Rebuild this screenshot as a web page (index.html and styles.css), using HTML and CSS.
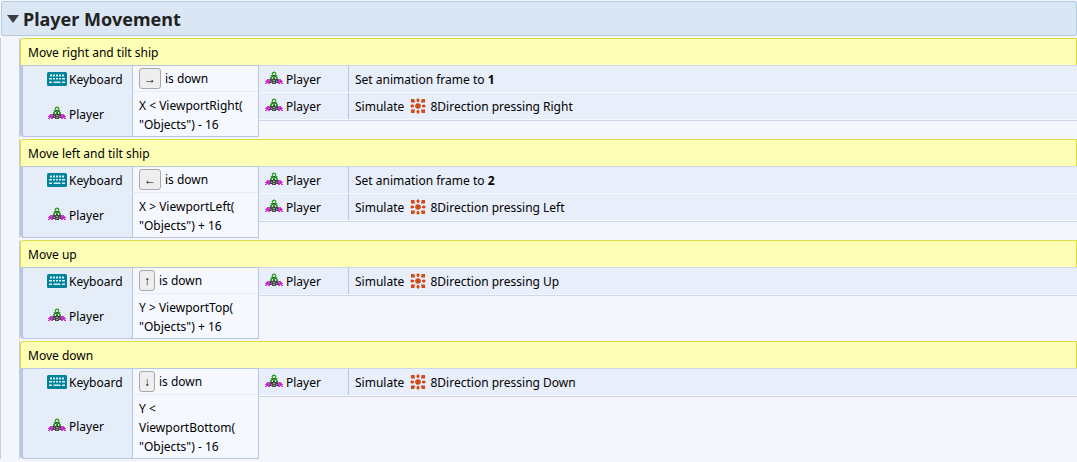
FILE: index.html
```html
<!DOCTYPE html>
<html lang="en">
<head>
<meta charset="utf-8">
<title>Event sheet</title>
<link rel="stylesheet" href="styles.css">
</head>
<body>
<svg class="symbols" aria-hidden="true">
  <symbol id="keyboard" viewBox="0 0 20 14">
    <rect width="20" height="14" rx="1.500" fill="#00829b"/>
    <path fill="#d5edf4" d="M3 2.500h2v2H3zM6 2.500h2v2H6zM9 2.500h2v2H9zM12 2.500h2v2h-2zM15 2.500h2v2h-2zM2 6h3v1.500H2zM6 6h2v1.500H6zM9 6h2v1.500H9zM12 6h2v1.500h-2zM15 6h3v1.500h-3zM2 9.500h3v1.500H2zM6.500 9.500h7v1.500h-7zM15 9.500h3v1.500h-3z"/>
  </symbol>
  <symbol id="ship" viewBox="0 0 18 14" shape-rendering="crispEdges">
    <path fill="#cf38d6" d="M2 8h3v1H2zM1 9h4v1H1zM0 10h5v1H0zM1 11h5v1H1zM0 12h2v1H0zM3 12h2v1H3zM13 8h3v1h-3zM13 9h4v1h-4zM13 10h5v1h-5zM12 11h5v1h-5zM16 12h2v1h-2zM13 12h2v1h-2z"/>
    <path fill="#92209a" d="M2 10h1v1H2zM4 11h1v1H4zM15 10h1v1h-1zM13 11h1v1h-1z"/>
    <path fill="#a6cfa8" d="M8 0h2v1H8zM6 2h1v1H6zM11 2h1v1h-1zM5 4h1v1H5zM12 4h1v1h-1z"/>
    <path fill="#454b45" d="M7 2h4v10H7zM6 4h6v8H6zM5 7h8v5H5zM7 12h4v1H7z"/>
    <path fill="#35a036" d="M7 1h4v1H7zM7 2h1v3H7zM10 2h1v3h-1zM6 4h1v4H6zM11 4h1v4h-1zM5 6h1v2H5zM12 6h1v2h-1zM8 5h2v2H8z"/>
    <path fill="#c4ecb6" d="M8 2h2v2H8zM7 6h1v2H7zM10 6h1v2h-1z"/>
    <path fill="#9b9f9b" d="M8 9h2v1H8zM6 10h1v1H6zM11 10h1v1h-1zM8 11h2v1H8z"/>
  </symbol>
  <symbol id="direction" viewBox="0 0 16 16">
    <g fill="#d34a12">
      <circle cx="8" cy="8" r="2.800"/>
      <path d="M8 0l2.300 2.500H9V4H7V2.500H5.700zM8 16l2.300-2.500H9V12H7v1.500H5.700zM0 8l2.500-2.300V7H4v2H2.500v1.300zM16 8l-2.500-2.300V7H12v2h1.500v1.300z"/>
      <path d="M1 1h3.500v2h.5v1.500H3V4.500H1zM15 1h-3.500v2H11v1.500h2V4.500h2zM1 15h3.500v-2H5v-1.500H1zM15 15h-3.500v-2H11v-1.500h4z"/>
    </g>
  </symbol>
</svg>

<main class="sheet">
  <h1 class="group-header">
    <button class="toggle" type="button" aria-expanded="true" aria-label="Collapse group"><svg class="caret" viewBox="0 0 12 8"><path d="M0 0h12L6 8z"/></svg></button>
    <span>Player Movement</span>
  </h1>
  <div class="group-body">
    <section class="block">
      <h2 class="comment">Move right and tilt ship</h2>
      <div class="event">
        <div class="conditions">
          <div class="condition"><div class="object"><svg class="icon-key"><use href="#keyboard"/></svg><span>Keyboard</span></div><div class="test"><kbd>→</kbd> is down</div></div>
          <div class="condition"><div class="object"><svg class="icon-ship"><use href="#ship"/></svg><span>Player</span></div><div class="test">X &lt; ViewportRight(<wbr>"Objects") - 16</div></div>
        </div>
        <div class="actions">
          <div class="action"><div class="object"><svg class="icon-ship"><use href="#ship"/></svg><span>Player</span></div><div class="task">Set animation frame to <b>1</b></div></div>
          <div class="action"><div class="object"><svg class="icon-ship"><use href="#ship"/></svg><span>Player</span></div><div class="task">Simulate <svg class="icon-dir"><use href="#direction"/></svg> 8Direction pressing Right</div></div>
        </div>
      </div>
    </section>
    <section class="block">
      <h2 class="comment">Move left and tilt ship</h2>
      <div class="event">
        <div class="conditions">
          <div class="condition"><div class="object"><svg class="icon-key"><use href="#keyboard"/></svg><span>Keyboard</span></div><div class="test"><kbd>←</kbd> is down</div></div>
          <div class="condition"><div class="object"><svg class="icon-ship"><use href="#ship"/></svg><span>Player</span></div><div class="test">X &gt; ViewportLeft(<wbr>"Objects") + 16</div></div>
        </div>
        <div class="actions">
          <div class="action"><div class="object"><svg class="icon-ship"><use href="#ship"/></svg><span>Player</span></div><div class="task">Set animation frame to <b>2</b></div></div>
          <div class="action"><div class="object"><svg class="icon-ship"><use href="#ship"/></svg><span>Player</span></div><div class="task">Simulate <svg class="icon-dir"><use href="#direction"/></svg> 8Direction pressing Left</div></div>
        </div>
      </div>
    </section>
    <section class="block">
      <h2 class="comment">Move up</h2>
      <div class="event">
        <div class="conditions">
          <div class="condition"><div class="object"><svg class="icon-key"><use href="#keyboard"/></svg><span>Keyboard</span></div><div class="test"><kbd>↑</kbd> is down</div></div>
          <div class="condition"><div class="object"><svg class="icon-ship"><use href="#ship"/></svg><span>Player</span></div><div class="test">Y &gt; ViewportTop(<wbr>"Objects") + 16</div></div>
        </div>
        <div class="actions">
          <div class="action"><div class="object"><svg class="icon-ship"><use href="#ship"/></svg><span>Player</span></div><div class="task">Simulate <svg class="icon-dir"><use href="#direction"/></svg> 8Direction pressing Up</div></div>
        </div>
      </div>
    </section>
    <section class="block">
      <h2 class="comment">Move down</h2>
      <div class="event">
        <div class="conditions">
          <div class="condition"><div class="object"><svg class="icon-key"><use href="#keyboard"/></svg><span>Keyboard</span></div><div class="test"><kbd>↓</kbd> is down</div></div>
          <div class="condition"><div class="object"><svg class="icon-ship"><use href="#ship"/></svg><span>Player</span></div><div class="test">Y &lt; ViewportBottom(<wbr>"Objects") - 16</div></div>
        </div>
        <div class="actions">
          <div class="action"><div class="object"><svg class="icon-ship"><use href="#ship"/></svg><span>Player</span></div><div class="task">Simulate <svg class="icon-dir"><use href="#direction"/></svg> 8Direction pressing Down</div></div>
        </div>
      </div>
    </section>
  </div>
</main>
</body>
</html>
```
FILE: styles.css
```css
* { box-sizing: border-box; }
body {
  margin: 0;
  background: #f5f6fc;
  color: #000;
  font: 12px/19px "Noto Sans", "Open Sans", sans-serif;
}
.symbols { display: none; }
.sheet { padding-top: 1px; }
.group-header {
  display: flex;
  align-items: center;
  gap: 4px;
  height: 35px;
  margin: 0 0 0 1px;
  padding-left: 5px;
  border: 1px solid #b5cbe3;
  border-radius: 2px;
  background: #dae6f4;
  color: #222;
  font-size: 18px;
  line-height: 26px;
  font-weight: 700;
}
.toggle {
  display: flex;
  padding: 0;
  border: 0;
  background: none;
}
.caret { width: 12px; height: 8px; fill: #3d3d42; }
.group-body {
  margin-top: 2px;
  padding-left: 18px;
  border-left: 1px solid #c9cde2;
}
.block {
  margin-bottom: 2px;
  border-left: 1px solid #c5cce0;
}
.comment {
  height: 27px;
  margin: 0;
  padding: 4px 7px 3px;
  border: 1px solid #dcdc44;
  border-bottom: 0;
  border-radius: 4px 0 0 0;
  background: #feffb6;
  font-size: 12px;
  line-height: 19px;
  font-weight: 400;
}
.event { display: flex; align-items: flex-start; }
.conditions {
  flex: none;
  width: 239px;
  border: 1px solid #b9c8e0;
  border-left-width: 3px;
  border-radius: 0 0 0 4px;
  background: #e5edf9;
}
.condition { display: flex; }
.object {
  display: flex;
  align-items: center;
  gap: 2px;
}
.condition .object {
  width: 109px;
  padding-left: 24px;
}
.test {
  flex: 1;
  padding: 4px 6px 2px;
  border-left: 1px solid #b9c8e0;
  background: #f5f8ff;
}
.condition:first-child .test {
  display: flex;
  align-items: center;
  gap: 4px;
  height: 26px;
  padding: 0 6px;
  border-bottom: 1px solid #e5ebf8;
}
kbd {
  height: 21px;
  padding: 0 4px;
  border: 1px solid #a8a8a8;
  border-radius: 3px;
  background: #eee;
  font: inherit;
}
.actions {
  flex: 1;
  border-top: 1px solid #cfd7ea;
  border-bottom: 1px solid #cfd7ea;
}
.action {
  display: flex;
  height: 27px;
  border-bottom: 1px solid #f5f8ff;
  background: #e8eefa;
}
.action .object {
  width: 90px;
  padding-left: 6px;
  border-right: 1px solid #b9c8e0;
}
.task {
  padding: 4px 6px 3px;
}
.icon-key { width: 20px; height: 14px; margin-bottom: 1px; }
.icon-ship { width: 18px; height: 14px; margin: 0 1px 3px 0; }
.condition .icon-ship { margin-left: 1px; }
.icon-dir { width: 16px; height: 16px; margin: 0 1px 0 3px; vertical-align: -3px; }
```
